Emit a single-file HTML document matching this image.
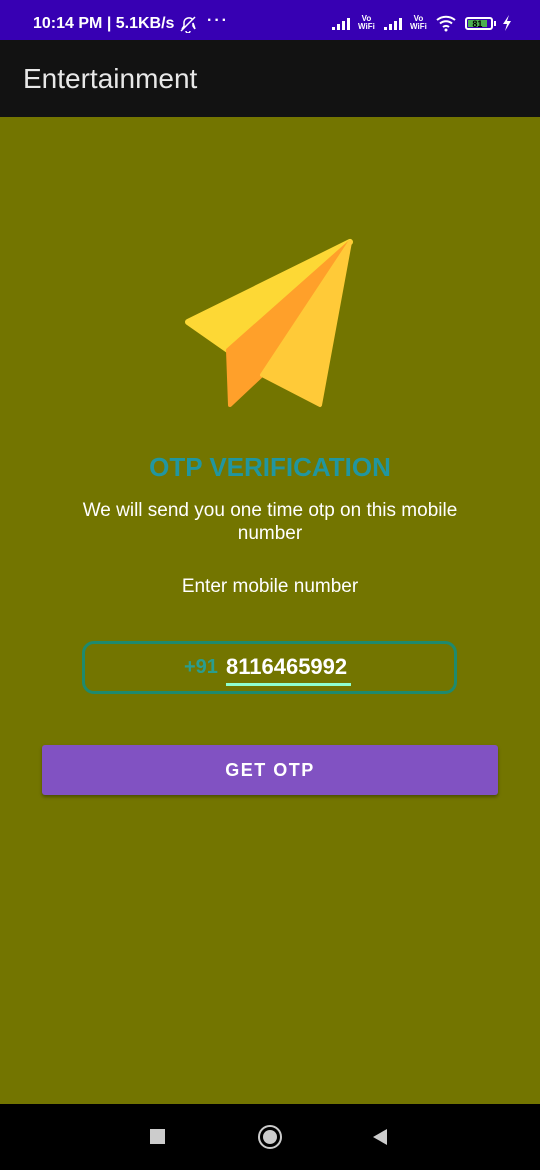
<!DOCTYPE html>
<html><head><meta charset="utf-8"><style>
*{margin:0;padding:0;box-sizing:border-box}
body{width:540px;height:1170px;background:#737500;font-family:"Liberation Sans",Roboto,sans-serif;position:relative;overflow:hidden}
.sb{position:absolute;top:0;left:0;width:540px;height:40px;background:#3700b3;color:#fff;font-weight:bold;font-size:16px}
.ab{position:absolute;top:40px;left:0;width:540px;height:77px;background:#121212;color:#e8e8e8;font-size:28px}
.nav{position:absolute;bottom:0;left:0;width:540px;height:66px;background:#000}
.c{position:absolute;left:0;width:540px;text-align:center}
.vw{position:absolute;top:15px;font-size:8px;line-height:8px;font-weight:bold;text-align:center}
</style></head><body>
<div class="sb">
<span style="position:absolute;left:33px;top:15px">10:14 PM | 5.1KB/s</span>
<svg style="position:absolute;left:178px;top:15px" width="20" height="18" viewBox="0 0 20 18"><path d="M4 14 L6 11 V7 a5 5 0 0 1 9 -2 M15 8 V11 L17 14 Z M3 16 L17 2 M8 16 a2 2 0 0 0 4 0" stroke="#fff" stroke-width="1.5" fill="none"/></svg>
<span style="position:absolute;left:207px;top:12px;letter-spacing:2px">···</span>
<svg style="position:absolute;left:332px;top:17px" width="22" height="13"><rect x="0" y="10" width="3" height="3" fill="#fff"/><rect x="5" y="7" width="3" height="6" fill="#fff"/><rect x="10" y="4" width="3" height="9" fill="#fff"/><rect x="15" y="1" width="3" height="12" fill="#fff"/></svg>
<div class="vw" style="left:358px">Vo<br>WiFi</div>
<svg style="position:absolute;left:384px;top:17px" width="22" height="13"><rect x="0" y="10" width="3" height="3" fill="#fff"/><rect x="5" y="7" width="3" height="6" fill="#fff"/><rect x="10" y="4" width="3" height="9" fill="#fff"/><rect x="15" y="1" width="3" height="12" fill="#fff"/></svg>
<div class="vw" style="left:410px">Vo<br>WiFi</div>
<svg style="position:absolute;left:436px;top:14px" width="22" height="18" viewBox="0 0 22 18"><path d="M1 6 a14 14 0 0 1 18 0 M4 9.5 a9 9 0 0 1 12 0 M7 13 a4.5 4.5 0 0 1 6 0" stroke="#fff" stroke-width="2" fill="none"/><circle cx="10" cy="16" r="1.5" fill="#fff"/></svg>
<div style="position:absolute;left:465px;top:17px;width:28px;height:13px;border:2px solid #fff;border-radius:3px;padding:1px"><div style="background:#4caf50;height:100%;width:85%;font-size:9px;color:#000;text-align:center;line-height:8px">81</div></div>
<div style="position:absolute;left:494px;top:21px;width:2px;height:5px;background:#fff"></div>
<svg style="position:absolute;left:502px;top:15px" width="10" height="16"><polygon points="7,0 1,9 5,9 3,16 9,6 5,6" fill="#fff"/></svg>
</div>
<div class="ab"><span style="position:absolute;left:23px;top:23px">Entertainment</span></div>
<svg style="position:absolute;left:0;top:0" width="540" height="420">
<polygon points="350,242 188,322 228,350" fill="#fdd835" stroke="#fdd835" stroke-width="6" stroke-linejoin="round"/>
<polygon points="350,242 228,350 230,405 262,375" fill="#ffa02a" stroke="#ffa02a" stroke-width="4" stroke-linejoin="round"/>
<polygon points="350,242 262,375 320,405" fill="#ffca38" stroke="#ffca38" stroke-width="4" stroke-linejoin="round"/>
</svg>
<div class="c" style="top:452px;color:#2196a0;font-size:26px;font-weight:bold">OTP VERIFICATION</div>
<div class="c" style="top:499px;color:#fff;font-size:19px;line-height:23px;padding:0 60px">We will send you one time otp on this mobile number</div>
<div class="c" style="top:576px;color:#fff;font-size:19px">Enter mobile number</div>
<div style="position:absolute;left:82px;top:641px;width:375px;height:53px;border:3px solid #1e8a6e;border-radius:12px"></div>
<span style="position:absolute;left:184px;top:656px;color:#2a9d8f;font-size:20px;font-weight:bold">+91</span>
<span style="position:absolute;left:226px;top:654px;color:#fff;font-size:22px;font-weight:bold">8116465992</span>
<div style="position:absolute;left:226px;top:683px;width:125px;height:3px;background:#8fffd0"></div>
<div style="position:absolute;left:42px;top:745px;width:456px;height:50px;background:#8152c2;border-radius:3px;box-shadow:0 2px 3px rgba(0,0,0,.35);color:#fff;font-weight:bold;font-size:18px;letter-spacing:1.5px;text-align:center;line-height:50px">GET OTP</div>
<div class="nav">
<div style="position:absolute;left:150px;top:25px;width:15px;height:15px;background:#ccc"></div>
<div style="position:absolute;left:258px;top:21px;width:24px;height:24px;border:2px solid #ccc;border-radius:50%"><div style="margin:3px;width:14px;height:14px;background:#ccc;border-radius:50%"></div></div>
<svg style="position:absolute;left:372px;top:25px" width="16" height="16"><polygon points="15,0 15,16 1,8" fill="#ccc"/></svg>
</div>
</body></html>
